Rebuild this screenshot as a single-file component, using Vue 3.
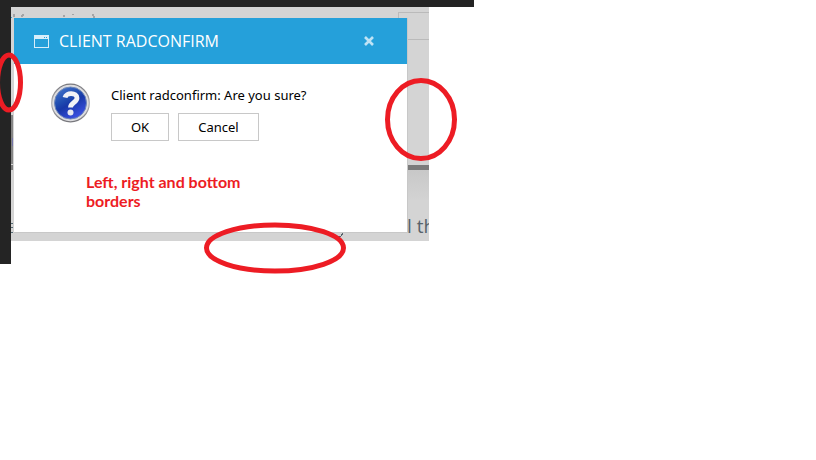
<script setup>
import { ref } from 'vue'

const open = ref(true)

function close() {
  open.value = false
}
</script>

<template>
  <div class="page">
    <div class="top-strip"></div>
    <div class="main">
      <div class="side-strip"></div>
      <div class="overlay">
        <!-- dimmed page behind the dialog -->
        <svg class="behind" width="418" height="234" viewBox="0 0 418 234" fill="none" shape-rendering="crispEdges">
          <defs>
            <linearGradient id="fade" x1="0" y1="0" x2="0" y2="1">
              <stop offset="0" stop-color="#c8c8c8" />
              <stop offset="1" stop-color="#d3d3d3" />
            </linearGradient>
          </defs>
          <path d="M387.5 11V5.5H418M397 32.5H418" stroke="#bababa" />
          <path d="M0 10.5h1" stroke="#4a9cc4" />
          <path d="M2 7h2v3h-2zM11 7h2v2h-1v1h-2v-2h1zM52 8h2v2h-2zM61 7h2v1h-2zM81 7h2v2h1v2h-2v-2h-1z" fill="#a4a4a6" />
          <rect x="397" y="163" width="21" height="30" fill="url(#fade)" />
          <rect x="397" y="158" width="21" height="5" fill="#7b7b7b" />
          <rect x="0" y="108" width="2" height="49" fill="#858585" />
          <rect x="1" y="131" width="1" height="8" fill="#7474a8" />
          <rect x="0" y="158" width="2" height="5" fill="#7b7b7b" />
          <path d="M0 216.5h2M0 220.5h2M0 225.5h2" stroke="#536872" />
          <path d="M327 229h3v-2h1v-1h1v2h-1v1h-1v1h-3z" fill="#57636b" />
        </svg>
        <span class="behind-text">l th</span>

        <div v-if="open" class="dialog" role="dialog" aria-labelledby="dialog-title">
          <div class="titlebar">
            <svg class="window-icon" width="15" height="13" viewBox="0 0 15 13" shape-rendering="crispEdges">
              <path d="M0 0h15v13H0z M1 4v8h13V4z" fill="#d8eefa" fill-rule="evenodd" />
              <path d="M10 2h1v1h-1zM12 2h1v1h-1z" fill="#25a0da" />
            </svg>
            <h1 id="dialog-title" class="title">CLIENT RADCONFIRM</h1>
            <button class="close" type="button" aria-label="Close" @click="close">
              <svg width="10" height="10" viewBox="0 0 10 10">
                <path d="M1 1l8 8M9 1l-8 8" stroke="#bfe3f5" stroke-width="2.6" />
              </svg>
            </button>
          </div>

          <div class="body">
            <svg class="question" width="40" height="40" viewBox="0 0 40 40">
              <defs>
                <linearGradient id="rim" x1="0" y1="0" x2="0" y2="1">
                  <stop offset="0" stop-color="#77777c" />
                  <stop offset="0.5" stop-color="#b0b0b5" />
                  <stop offset="1" stop-color="#77777c" />
                </linearGradient>
                <linearGradient id="ball" x1="0" y1="0" x2="0.6" y2="1">
                  <stop offset="0" stop-color="#4b7cd0" />
                  <stop offset="0.45" stop-color="#1f4bb0" />
                  <stop offset="0.6" stop-color="#1838a8" />
                  <stop offset="1" stop-color="#3a4fe0" />
                </linearGradient>
              </defs>
              <circle cx="19.5" cy="20" r="18.8" fill="#dcdcdf" stroke="url(#rim)" stroke-width="1.2" />
              <circle cx="19.5" cy="20" r="16" fill="url(#ball)" stroke="#7088b8" />
              <path d="M14 14.5c1-5.500 12-5 12 .5 0 4.500-6.500 4.500-6.500 9.500" fill="none" stroke="#f1f2f6" stroke-width="4.8" />
              <circle cx="19.5" cy="29.5" r="3" fill="#e6e8f0" />
            </svg>
            <div class="content">
              <p class="message">Client radconfirm: Are you sure?</p>
              <div class="buttons">
                <button class="btn" type="button" @click="close">OK</button>
                <button class="btn wide" type="button" @click="close">Cancel</button>
              </div>
            </div>
          </div>

          <p class="note">Left, right and bottom borders</p>
        </div>
      </div>
    </div>

    <!-- hand-drawn markers around the borders -->
    <svg class="markers" width="474" height="280" viewBox="0 0 474 280" fill="none" stroke="#ed1c24" stroke-width="5">
      <ellipse cx="9" cy="82.5" rx="11.5" ry="27.5" />
      <ellipse cx="421" cy="119.5" rx="33.5" ry="39" />
      <ellipse cx="275" cy="248" rx="68.5" ry="23" />
    </svg>
  </div>
</template>

<style>
body {
  margin: 0;
  background: #fff;
}
</style>

<style scoped>
.page {
  position: relative;
  max-width: 474px;
  min-height: 280px;
  font-family: "Noto Sans", "Open Sans", sans-serif;
  color: #000;
}

.top-strip {
  height: 7px;
  background: #242424;
}

.main {
  display: flex;
  align-items: flex-start;
}

.side-strip {
  width: 11px;
  align-self: stretch;
  background: #242424;
}

.overlay {
  position: relative;
  padding: 11px 21px 8px 3px;
  margin-bottom: 23px;
  background: #d4d4d4;
  overflow: hidden;
}

.behind {
  position: absolute;
  top: 0;
  left: 0;
}

.behind-text {
  position: absolute;
  left: 396px;
  bottom: 2px;
  font-family: "Open Sans", sans-serif;
  font-size: 19px;
  line-height: 26px;
  color: #57636b;
  white-space: nowrap;
}

.dialog {
  position: relative;
  box-sizing: border-box;
  width: 394px;
  min-height: 215px;
  border-right: 1px solid #c8c8c8;
  border-bottom: 1px solid #c8c8c8;
  background: #fff;
}

.titlebar {
  display: flex;
  align-items: center;
  height: 46px;
  padding: 0 33px 0 20px;
  background: #25a0da;
}

.title {
  flex: 1;
  margin: 0 0 0 10px;
  font-family: "Open Sans", sans-serif;
  font-size: 16px;
  line-height: 24px;
  font-weight: 400;
  color: #fff;
}

.close {
  display: flex;
  padding: 0;
  border: 0;
  background: none;
  cursor: pointer;
}

.body {
  display: flex;
  gap: 20px;
  padding: 19px 20px 0 37px;
}

.message {
  margin: 2px 0 8px;
  font-size: 13px;
  line-height: 20px;
}

.buttons {
  display: flex;
  gap: 9px;
}

.btn {
  box-sizing: border-box;
  width: 58px;
  height: 28px;
  padding: 0;
  border: 1px solid #c8c8c8;
  background: #fff;
  font-family: inherit;
  font-size: 13px;
  line-height: 20px;
  color: #000;
  cursor: pointer;
}

.btn.wide {
  width: 81px;
}

.note {
  width: 170px;
  margin: 31px 0 0 72px;
  font-family: Lato, sans-serif;
  font-size: 16px;
  line-height: 19px;
  font-weight: 700;
  color: #ed1c24;
}

.markers {
  position: absolute;
  top: 0;
  left: 0;
  pointer-events: none;
}
</style>
